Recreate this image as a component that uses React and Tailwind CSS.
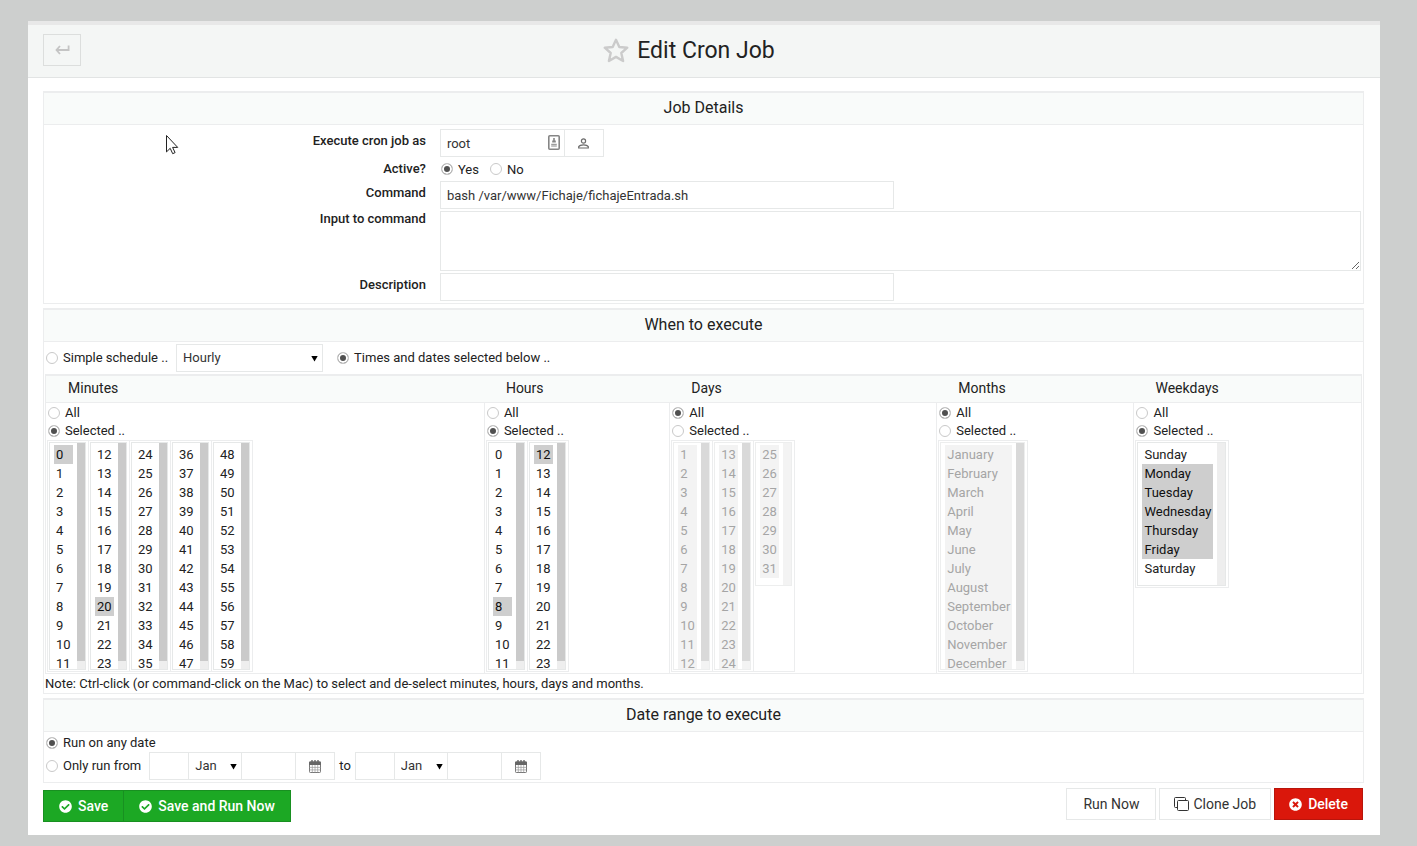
import React from 'react';
import { FaCheckCircle, FaTimesCircle } from 'react-icons/fa';

const range = (from, to) => Array.from({ length: to - from + 1 }, (_, i) => String(from + i));
const MONTHS = ['January', 'February', 'March', 'April', 'May', 'June', 'July', 'August', 'September', 'October', 'November', 'December'];
const WEEKDAYS = ['Sunday', 'Monday', 'Tuesday', 'Wednesday', 'Thursday', 'Friday', 'Saturday'];

const FIELD = 'h-7 border border-[#e6e8e8] bg-white px-1.5 text-[13px] text-[#333] outline-none';

function Radio({ name, label, checked = false }) {
  return (
    <label className="flex items-center gap-[5px] whitespace-nowrap">
      <input
        type="radio"
        name={name}
        defaultChecked={checked}
        className="size-3 appearance-none rounded-full border border-[#c9c9c9] bg-white checked:bg-[#505050] checked:shadow-[inset_0_0_0_2px_#fff]"
      />
      {label}
    </label>
  );
}

function Section({ title, children }) {
  return (
    <section className="border border-t-2 border-[#ecedee]">
      <h2 className="border-b border-[#ecedee] bg-[#f9fbfa] pb-px text-center text-[16px] leading-[30px] text-[#222]">{title}</h2>
      {children}
    </section>
  );
}

function ListBox({ label, options, selected = [], disabled = false, short = false, scrolls = true }) {
  return (
    <div className={`flex border border-[#e6e8e8] bg-white ${short ? 'h-[144px]' : 'h-[228px]'} ${disabled ? 'opacity-70' : ''}`}>
      <select
        multiple
        aria-label={label}
        disabled={disabled}
        defaultValue={selected}
        className="h-full overflow-hidden bg-white px-1 pt-0.5 text-[13px] text-[#222] outline-none disabled:text-[#777]"
      >
        {options.map((o) => (
          <option key={o} value={o} className={`h-[19px] min-w-[19px] px-0.5 pt-0.5 pb-0 ${disabled ? 'bg-[#eeeeee]' : ''}`}>
            {o}
          </option>
        ))}
      </select>
      <div aria-hidden="true" className="w-2 bg-[#eeeeee]">
        {scrolls && <div className="h-[218px] bg-[#cacaca]" />}
      </div>
    </div>
  );
}

function Lists({ children }) {
  return (
    <div className="flex items-start">
      <div className="flex border-l border-[#ecedee]">
        {React.Children.map(children, (c) => (
          <div className="border-y border-r border-[#ecedee] py-px pr-0.5 pl-px">{c}</div>
        ))}
      </div>
    </div>
  );
}

function Arrow({ className }) {
  return (
    <svg className={`pointer-events-none absolute top-3 ${className}`} width="7" height="6" viewBox="0 0 7 6" aria-hidden="true">
      <path d="M.3 0h6.4L3.5 5.6z" fill="#000" />
    </svg>
  );
}

function CalendarIcon() {
  return (
    <svg width="12" height="13" viewBox="0 0 12 13" aria-hidden="true">
      <rect x="0.5" y="2" width="11" height="10.5" rx="0.8" fill="#fff" stroke="#777" />
      <path d="M0 2.2Q0 1.5.8 1.5h10.4q.8 0 .8.7V5H0z" fill="#666" />
      <path d="M3 0v3M6 0v3M9 0v3" stroke="#666" strokeWidth="1.4" />
      <path d="M3.3 5v7.5M6 5v7.5M8.7 5v7.5M.5 7.4h11M.5 9.9h11" stroke="#999" strokeWidth="0.7" />
    </svg>
  );
}

function DateFields({ label }) {
  return (
    <div className="flex">
      <input aria-label={`${label} day`} className={`${FIELD} w-10`} />
      <div className="relative -ml-px">
        <select aria-label={`${label} month`} className={`${FIELD} w-[54px] appearance-none`}>
          <option>Jan</option>
        </select>
        <Arrow className="right-[5px]" />
      </div>
      <input aria-label={`${label} year`} className={`${FIELD} -ml-px w-[55px]`} />
      <button type="button" aria-label={`${label} calendar`} className="-ml-px flex h-7 w-10 items-center justify-center border border-[#e6e8e8] bg-white">
        <CalendarIcon />
      </button>
    </div>
  );
}

function Row({ label, htmlFor, labelClass = 'pt-0.5 leading-5', children }) {
  return (
    <div className="flex items-start gap-[14px]">
      <label htmlFor={htmlFor} className={`w-[29%] shrink-0 text-right font-medium ${labelClass}`}>
        {label}
      </label>
      <div className="flex min-w-0 flex-1 items-center">{children}</div>
    </div>
  );
}

const COLUMNS = [
  {
    title: 'Minutes', width: 'w-[33.3%]', all: false,
    lists: [
      { options: range(0, 11), selected: ['0'] },
      { options: range(12, 23), selected: ['20'] },
      { options: range(24, 35) },
      { options: range(36, 47) },
      { options: range(48, 59) },
    ],
  },
  {
    title: 'Hours', width: 'w-[14.1%]', all: false,
    lists: [
      { options: range(0, 11), selected: ['8'] },
      { options: range(12, 23), selected: ['12'] },
    ],
  },
  {
    title: 'Days', width: 'w-[20.3%]', all: true,
    lists: [
      { options: range(1, 12) },
      { options: range(13, 24) },
      { options: range(25, 31), short: true, scrolls: false },
    ],
  },
  { title: 'Months', width: 'w-[15%]', all: true, lists: [{ options: MONTHS }] },
  {
    title: 'Weekdays', width: 'w-[17.3%]', all: false,
    lists: [{ options: WEEKDAYS, selected: WEEKDAYS.slice(1, 6), short: true, scrolls: false }],
  },
];

const GREEN = 'flex h-8 items-center gap-1.5 border border-[#189021] bg-[#1ca824] px-[15px] text-[14px] font-medium text-white';
const PLAIN = 'flex h-8 items-center gap-1 border border-[#e6e8e8] bg-white text-[14px] text-[#333]';

export default function App() {
  return (
    <div className="relative min-h-screen bg-[#cdcfce] pt-[21px] pr-[37px] pb-[11px] pl-7 font-['Roboto',sans-serif] text-[13px] text-[#222]">
      <main className="bg-white pb-[13px]">
        <header className="grid grid-cols-[38px_1fr_38px] items-start border-t-4 border-b border-t-[#e8e8e8] border-b-[#e2e4e4] bg-[#f4f6f5] pr-[45px] pl-[15px]">
          <button type="button" aria-label="Back" className="mt-[9px] flex h-8 w-[38px] items-center justify-center border border-[#dcdedd]">
            <svg width="15" height="10" viewBox="0 0 15 10" fill="none" stroke="#c4c4c4" strokeWidth="1.8" aria-hidden="true">
              <path d="M13.6 0.5v4.5H1.8M5 1 1.5 5 5 9" />
            </svg>
          </button>
          <h1 className="flex h-[52px] items-center justify-center gap-2 text-[23px]">
            <svg className="mb-0.5" width="26" height="25" viewBox="0 0 26 25" fill="none" stroke="#cbcbcb" strokeWidth="2.4" strokeLinejoin="round" aria-hidden="true">
              <path d="M13 1.8 16.3 9 24.3 9.7 18.3 15 20.1 23 13 18.9 5.9 23 7.7 15 1.7 9.7 9.7 9z" />
            </svg>
            Edit Cron Job
          </h1>
        </header>

        <form className="flex flex-col gap-1 pt-[13px] pr-4 pl-[15px]" onSubmit={(e) => e.preventDefault()}>
          <Section title="Job Details">
            <div className="flex flex-col gap-0.5 pt-1 pr-0.5 pb-0.5">
              <Row label="Execute cron job as" htmlFor="user">
                <div className="relative">
                  <input id="user" defaultValue="root" className={`${FIELD} block w-[125px] pr-6`} />
                  <svg className="pointer-events-none absolute top-[6px] right-[5px]" width="12" height="15" viewBox="0 0 12 15" aria-hidden="true">
                    <rect x="0.8" y="0.8" width="10.4" height="13.4" rx="1" fill="#fff" stroke="#858585" strokeWidth="1.6" />
                    <path d="M5.2 3h1.6v2.4h1v2.2h-3.6V5.4h1z" fill="#858585" />
                    <path d="M3.2 9.3h5.6M3.2 11h5.6" stroke="#858585" strokeWidth="1" />
                  </svg>
                </div>
                <button type="button" aria-label="Select user" className="-ml-px flex h-7 w-10 items-center justify-center border border-[#e6e8e8] bg-white">
                  <svg width="11" height="11" viewBox="0 0 11 11" fill="none" stroke="#6b6b6b" strokeWidth="1.2" aria-hidden="true">
                    <circle cx="5.5" cy="3" r="2.1" />
                    <path d="M.7 10V8.6Q1.8 6.8 5.5 6.8t4.8 1.8V10z" />
                  </svg>
                </button>
              </Row>
              <Row label="Active?" labelClass="leading-5">
                <div className="flex h-5 items-end gap-[11px] pl-px">
                  <Radio name="active" label="Yes" checked />
                  <Radio name="active" label="No" />
                </div>
              </Row>
              <Row label="Command" htmlFor="command">
                <input id="command" defaultValue="bash /var/www/Fichaje/fichajeEntrada.sh" className={`${FIELD} w-[454px]`} />
              </Row>
              <Row label="Input to command" htmlFor="input" labelClass="leading-4">
                <textarea id="input" className="block h-[60px] w-full resize border border-[#e6e8e8] bg-white px-1.5" />
              </Row>
              <Row label="Description" htmlFor="description">
                <input id="description" className={`${FIELD} w-[454px]`} />
              </Row>
            </div>
          </Section>

          <Section title="When to execute">
            <div className="px-px pt-0.5">
              <div className="flex items-center pb-0.5 pl-px">
                <Radio name="mode" label="Simple schedule .." />
                <div className="relative ml-2">
                  <select aria-label="Simple schedule" className={`${FIELD} block w-[147px] appearance-none`}>
                    <option>Hourly</option>
                  </select>
                  <Arrow className="right-[5px]" />
                </div>
                <div className="ml-[14px]">
                  <Radio name="mode" label="Times and dates selected below .." checked />
                </div>
              </div>
              <table className="w-full table-fixed border-separate border-spacing-0 border border-t-2 border-[#ecedee]">
                <thead>
                  <tr className="bg-[#f9fbfa]">
                    {COLUMNS.map((c) => (
                      <th key={c.title} className={`${c.width} h-[27px] border-b border-[#ecedee] p-0 pb-0.5 pl-[22px] text-left text-[14px] font-normal`}>
                        {c.title}
                      </th>
                    ))}
                  </tr>
                </thead>
                <tbody>
                  <tr>
                    {COLUMNS.map((c, i) => (
                      <td key={c.title} className={`p-px align-top ${i ? 'border-l border-[#ecedee]' : ''}`}>
                        <div className="flex flex-col pl-px leading-[18px]">
                          <Radio name={c.title} label="All" checked={c.all} />
                          <Radio name={c.title} label="Selected .." checked={!c.all} />
                        </div>
                        <Lists>
                          {c.lists.map((l, j) => (
                            <ListBox key={j} label={`${c.title} ${j + 1}`} disabled={c.all} {...l} />
                          ))}
                        </Lists>
                      </td>
                    ))}
                  </tr>
                </tbody>
              </table>
              <p className="leading-[19px]">Note: Ctrl-click (or command-click on the Mac) to select and de-select minutes, hours, days and months.</p>
            </div>
          </Section>

          <Section title="Date range to execute">
            <div className="px-0.5 pt-px pb-0.5">
              <div className="leading-[19px]">
                <Radio name="range" label="Run on any date" checked />
              </div>
              <div className="flex items-center">
                <Radio name="range" label="Only run from" />
                <div className="ml-2">
                  <DateFields label="From" />
                </div>
                <span className="mx-1">to</span>
                <DateFields label="To" />
              </div>
            </div>
          </Section>

          <div className="flex items-start justify-between pt-px">
            <div className="flex pt-0.5">
              <button type="submit" className={GREEN}>
                <FaCheckCircle size={13} />
                Save
              </button>
              <button type="submit" className={`${GREEN} -ml-px`}>
                <FaCheckCircle size={13} />
                Save and Run Now
              </button>
            </div>
            <div className="flex gap-[3px] pr-px">
              <button type="button" className={`${PLAIN} px-4`}>Run Now</button>
              <button type="button" className={`${PLAIN} px-[14px]`}>
                <svg width="15" height="14" viewBox="0 0 15 14" fill="none" stroke="#333" aria-hidden="true">
                  <rect x="3.5" y="3.5" width="11" height="10" rx="1" />
                  <path d="M3 10.5H1.5q-1 0-1-1v-8q0-1 1-1h9q1 0 1 1V3" />
                </svg>
                Clone Job
              </button>
              <button type="button" className="flex h-8 items-center gap-1.5 border border-[#b8150c] bg-[#da170b] px-[14px] text-[14px] font-medium text-white">
                <FaTimesCircle size={13} />
                Delete
              </button>
            </div>
          </div>
        </form>
      </main>

      <svg className="pointer-events-none absolute top-[135px] left-[166px]" width="13" height="20" viewBox="0 0 13 20" aria-hidden="true">
        <path d="M.5.5v16.4l3.7-3.6 2.5 5.4 2.4-1.1-2.5-5.2h5.1z" fill="#fff" stroke="#222" />
      </svg>
    </div>
  );
}
